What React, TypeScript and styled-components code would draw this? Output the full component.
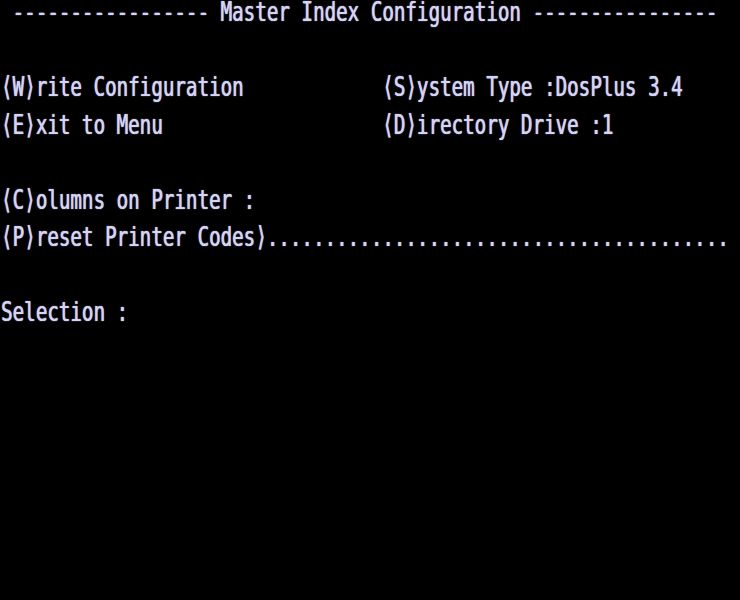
import React from "react";
import styled, { createGlobalStyle } from "styled-components";

const Global = createGlobalStyle`
  html, body { margin: 0; padding: 0; background: #000; }
  #root { width: 740px; height: 600px; }
`;

const Screen = styled.div`
  width: 740px;
  height: 600px;
  background: #000;
  display: grid;
  grid-template-rows: repeat(16, 37.5px);
  padding-left: 1px;
  box-sizing: border-box;
  font-family: "DejaVu Sans Mono", "Liberation Mono", monospace;
  font-size: 19.2px;
  font-weight: normal;
  color: #d4d4f8;
`;

const Row = styled.div<{ $split?: boolean }>`
  display: grid;
  grid-template-columns: ${(p) => (p.$split ? "33ch 1fr" : "1fr")};
  align-items: start;
`;

const Text = styled.span`
  display: block;
  white-space: pre;
  line-height: 18px;
  transform: scaleY(1.43);
  transform-origin: top left;
  text-shadow: 0 0 1px rgba(212, 212, 248, 0.9), 0.5px 0 0 rgba(212, 212, 248, 0.7);
`;

const title =
  " " + "-".repeat(17) + " Master Index Configuration " + "-".repeat(16);

export default function App() {
  return (
    <>
      <Global />
      <Screen>
        <Row>
          <Text>{title}</Text>
        </Row>
        <Row />
        <Row $split>
          <Text>⟨W⟩rite Configuration</Text>
          <Text>⟨S⟩ystem Type :DosPlus 3.4</Text>
        </Row>
        <Row $split>
          <Text>⟨E⟩xit to Menu</Text>
          <Text>⟨D⟩irectory Drive :1</Text>
        </Row>
        <Row />
        <Row>
          <Text>⟨C⟩olumns on Printer :</Text>
        </Row>
        <Row>
          <Text>{"⟨P⟩reset Printer Codes⟩" + ".".repeat(40)}</Text>
        </Row>
        <Row />
        <Row>
          <Text>Selection :</Text>
        </Row>
      </Screen>
    </>
  );
}
